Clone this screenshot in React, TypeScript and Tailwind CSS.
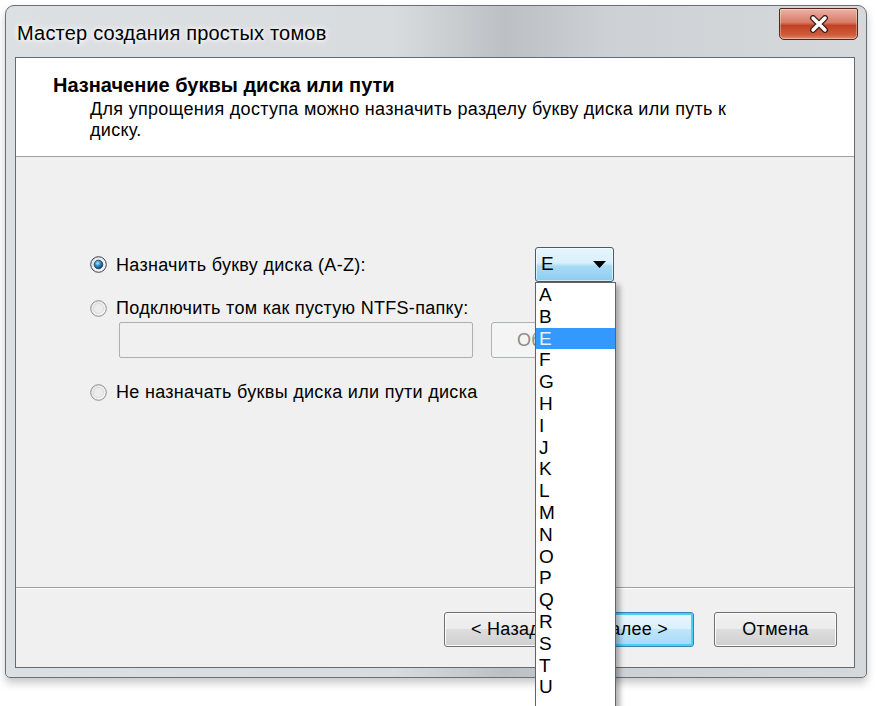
import React from "react";

function Radio({ checked }: { checked?: boolean }) {
  return (
    <svg width="17" height="17" viewBox="0 0 17 17" className="shrink-0">
      <defs>
        <linearGradient id={checked ? "rg1" : "rg0"} x1="0" y1="0" x2="1" y2="1">
          <stop offset="0" stopColor="#e2e2e2" />
          <stop offset="1" stopColor="#fafafa" />
        </linearGradient>
        <radialGradient id="dot" cx="0.4" cy="0.35" r="0.7">
          <stop offset="0" stopColor="#b9e6ff" />
          <stop offset="0.45" stopColor="#2d8fd0" />
          <stop offset="1" stopColor="#0a3558" />
        </radialGradient>
      </defs>
      <circle cx="8.5" cy="8.5" r="7.8" fill={checked ? "url(#rg1)" : "url(#rg0)"} stroke={checked ? "#35404a" : "#8a8e92"} strokeWidth="1" />
      {checked ? (
        <circle cx="8.5" cy="8.5" r="4.3" fill="url(#dot)" stroke="#16304a" strokeWidth="0.8" />
      ) : (
        <circle cx="8.5" cy="8.5" r="5" fill="#ececec" stroke="#d0d0d0" strokeWidth="0.6" />
      )}
    </svg>
  );
}

function Btn({ children, focused, className }: { children: React.ReactNode; focused?: boolean; className?: string }) {
  return (
    <div
      className={
        "h-[35px] rounded-[3px] border flex items-center justify-center text-[18px] tracking-[0.3px] text-black " +
        (focused
          ? "border-[#3c7fb1] shadow-[inset_0_0_0_2px_#48d0f5] bg-[linear-gradient(#eaf6fd_0%,#d9f0fc_50%,#bee6fd_50%,#a7d9f5_100%)] "
          : "border-[#707070] shadow-[inset_0_0_0_1px_#fcfcfc] bg-[linear-gradient(#f2f2f2_0%,#ebebeb_50%,#dddddd_50%,#cfcfcf_100%)] ") +
        (className || "")
      }
    >
      {children}
    </div>
  );
}

export default function App() {
  const letters = ["A", "B", "E", "F", "G", "H", "I", "J", "K", "L", "M", "N", "O", "P", "Q", "R", "S", "T", "U"];
  return (
    <div className="relative w-[876px] h-[706px] overflow-hidden bg-white pl-[5px] pt-[5px] font-['Liberation_Sans',Arial,sans-serif] text-black">
      {/* window */}
      <div className="w-[862px] h-[673px] rounded-t-[9px] rounded-b-[5px] border border-[#6a7076] bg-[linear-gradient(90deg,#dde0e3_0%,#d9dcdf_45%,#bcc0c4_58%,#cdd1d5_70%,#d6d9dc_100%)] shadow-[0_5px_9px_rgba(0,0,0,0.22)] flex flex-col">
        {/* title bar */}
        <div className="h-[51px] flex items-start justify-between shrink-0">
          <span className="mt-[15px] ml-[11px] text-[20px] tracking-[0.2px] leading-[24px] text-black [text-shadow:0_0_8px_#ffffff,0_0_4px_#ffffff]">
            Мастер создания простых томов
          </span>
          <div className="mt-[2px] mr-[8px] w-[79px] h-[32px] rounded-b-[5px] rounded-t-[2px] border border-[#5e2218] bg-[linear-gradient(#eab3a6_0%,#d77a66_45%,#c04226_55%,#cf5a3a_85%,#e08a6c_100%)] shadow-[inset_0_0_0_1px_rgba(255,255,255,0.35)] flex items-center justify-center">
            <svg width="22" height="18" viewBox="0 0 22 18">
              <path d="M5 3 L17 15 M17 3 L5 15" stroke="#3a1c16" strokeWidth="6" strokeLinecap="round" />
              <path d="M5 3 L17 15 M17 3 L5 15" stroke="#ffffff" strokeWidth="3.4" strokeLinecap="round" />
            </svg>
          </div>
        </div>
        {/* client area */}
        <div className="ml-[9px] w-[840px] h-[611px] border border-[#616b74] flex flex-col shrink-0">
          {/* header */}
          <div className="h-[99px] shrink-0 bg-white border-b border-[#a0a0a0] pl-[37px] pt-[15px]">
            <div className="text-[20px] leading-[24px] font-bold">Назначение буквы диска или пути</div>
            <div className="pl-[37px] mt-[2px] text-[18px] tracking-[0.3px] leading-[21px]">
              <div>Для упрощения доступа можно назначить разделу букву диска или путь к</div>
              <div>диску.</div>
            </div>
          </div>
          {/* body */}
          <div className="flex-1 bg-[#f0f0f0] pl-[74px] pt-[90px] text-[18px] tracking-[0.3px]">
            <div className="flex items-center h-[35px]">
              <div className="w-[445px] flex items-center gap-[9px]">
                <Radio checked />
                <span className="leading-[20px]">Назначить букву диска (A-Z):</span>
              </div>
              <div className="w-[79px] h-[35px] rounded-[3px] border border-[#2c628b] bg-[linear-gradient(#e6f5fc_0%,#d9f0fc_45%,#a9dbf6_55%,#8ccdf0_100%)] shadow-[inset_0_0_0_1px_rgba(255,255,255,0.6)] flex items-center justify-between pl-[5px] pr-[7px]">
                <span className="text-[19px]">E</span>
                <svg width="13" height="7" viewBox="0 0 13 7">
                  <path d="M0 0 H13 L6.5 7 Z" fill="#000" />
                </svg>
              </div>
            </div>
            <div className="flex items-center gap-[9px] h-[24px] mt-[14px]">
              <Radio />
              <span className="leading-[20px]">Подключить том как пустую NTFS-папку:</span>
            </div>
            <div className="flex items-center mt-[2px]">
              <div className="ml-[29px] w-[354px] h-[36px] rounded-[2px] border border-[#afafaf] bg-[#f0f0f0]" />
              <div className="ml-[18px] w-[123px] h-[36px] rounded-[3px] border border-[#adb2b5] bg-[#f4f4f4] flex items-center pl-[25px] text-[18px] text-[#8d8d8d]">
                Обзор...
              </div>
            </div>
            <div className="flex items-center gap-[9px] h-[24px] mt-[22px]">
              <Radio />
              <span className="leading-[20px]">Не назначать буквы диска или пути диска</span>
            </div>
          </div>
          {/* separator */}
          <div className="h-[2px] shrink-0 border-t border-[#a0a0a0] bg-white" />
          {/* footer */}
          <div className="h-[78px] shrink-0 bg-[#f0f0f0] flex justify-end items-start pt-[23px] pr-[17px]">
            <Btn className="w-[123px]">&lt; Назад</Btn>
            <Btn focused className="w-[122px] ml-[5px]">Далее &gt;</Btn>
            <Btn className="w-[123px] ml-[20px]">Отмена</Btn>
          </div>
        </div>
      </div>

      {/* open dropdown list */}
      <div className="absolute left-[535px] top-[282px] w-[81px] h-[440px] bg-white border border-[#646464] shadow-[4px_3px_5px_rgba(0,0,0,0.3)] pt-[1px]">
        {letters.map((l) => (
          <div
            key={l}
            className={
              "h-[21.8px] leading-[21.8px] pl-[3px] text-[19px] " +
              (l === "E" ? "bg-[#3399ff] text-[#e6f2ff]" : "text-black")
            }
          >
            {l}
          </div>
        ))}
      </div>
    </div>
  );
}
